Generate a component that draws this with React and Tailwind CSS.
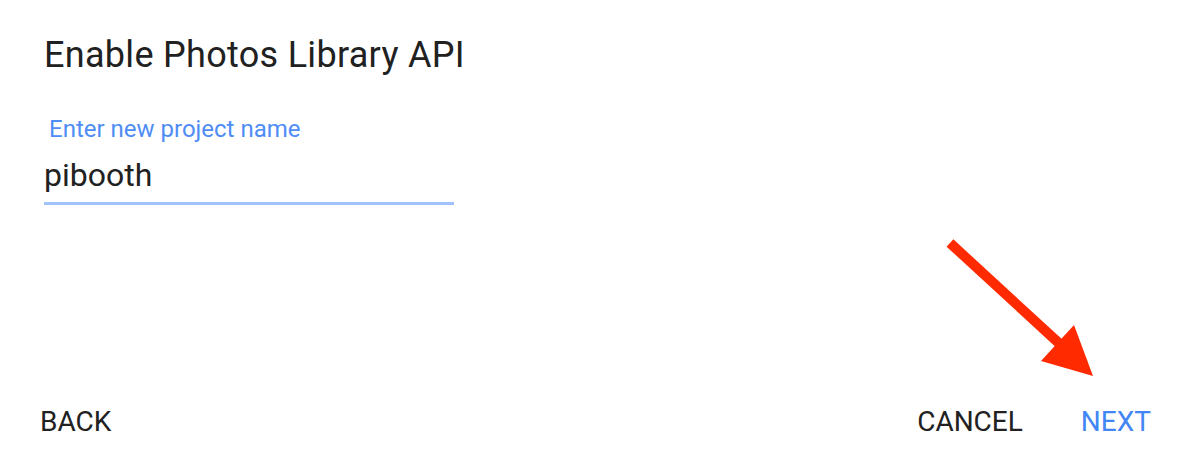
export default function App() {
  return (
    <div className="relative w-[1192px] h-[474px] bg-white flex flex-col" style={{ fontFamily: 'Roboto, "Noto Sans", sans-serif' }}>
      <div className="pl-[44px] pt-[37px]">
        <h1 className="text-[36px] leading-[36px] text-[#212121] tracking-[0.3px]">Enable Photos Library API</h1>
        <div className="mt-[44px] w-[410px]">
          <div className="pl-[5px] text-[24px] leading-[24px] text-[#4f8df5]">Enter new project name</div>
          <div className="mt-[18px] text-[32px] leading-[32px] text-[#212121]">pibooth</div>
          <div className="mt-[11px] h-[3px] bg-[#a1c2fa]" />
        </div>
      </div>
      <div className="mt-auto flex items-center pb-[38px] pl-[40px] pr-[41px]">
        <span className="text-[28px] leading-[28px] text-[#212121]">BACK</span>
        <span className="ml-auto text-[28px] leading-[28px] text-[#212121]">CANCEL</span>
        <span className="ml-[58px] text-[28px] leading-[28px] text-[#4285f4]">NEXT</span>
      </div>
      <svg className="absolute left-0 top-0" width="1192" height="474" viewBox="0 0 1192 474">
        <line x1="950" y1="243" x2="1062" y2="346" stroke="#ff2a00" strokeWidth="10" />
        <polygon points="1074,325 1041,361 1093,376" fill="#ff2a00" />
      </svg>
    </div>
  );
}
